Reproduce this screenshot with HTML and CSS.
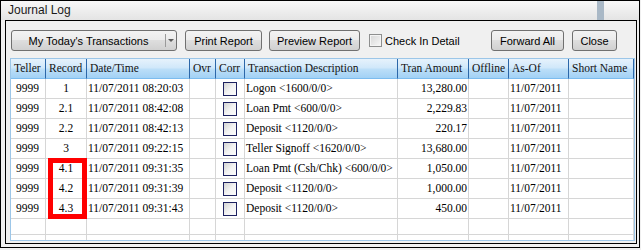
FILE: index.html
```html
<!DOCTYPE html>
<html lang="en">

<head>
    <meta charset="UTF-8">
    <title>Journal Log</title>
    <link rel="stylesheet" href="styles.css">
</head>

<body>
    <div class="window">
        <div class="titlebar">
            <span class="title">Journal Log</span>
            <span class="title-mark"></span>
        </div>

        <div class="panel">
            <div class="toolbar">
                <button class="btn combo">
                    <span class="combo-text">My Today's Transactions</span>
                    <span class="combo-sep"></span>
                    <span class="combo-arrow"><span class="arrow"></span></span>
                </button>
                <button class="btn btn-print">Print Report</button>
                <button class="btn btn-preview">Preview Report</button>
                <label class="check"><span class="check-box"></span>Check In Detail</label>
                <button class="btn btn-forward">Forward All</button>
                <button class="btn btn-close">Close</button>
            </div>

            <div class="grid">
                <table class="log">
                    <colgroup>
                        <col class="w-teller">
                        <col class="w-record">
                        <col class="w-date">
                        <col class="w-ovr">
                        <col class="w-corr">
                        <col class="w-desc">
                        <col class="w-amount">
                        <col class="w-offline">
                        <col class="w-asof">
                        <col class="w-short">
                    </colgroup>
                    <thead>
                        <tr>
                            <th>Teller</th>
                            <th>Record</th>
                            <th>Date/Time</th>
                            <th>Ovr</th>
                            <th>Corr</th>
                            <th>Transaction Description</th>
                            <th>Tran Amount</th>
                            <th>Offline</th>
                            <th>As-Of</th>
                            <th>Short Name</th>
                        </tr>
                    </thead>
                    <tbody>
                        <tr>
                            <td class="teller">9999</td><td class="c">1</td><td>11/07/2011 08:20:03</td><td></td>
                            <td class="c"><span class="cb"></span></td><td>Logon &lt;1600/0/0&gt;</td>
                            <td class="r">13,280.00</td><td></td><td>11/07/2011</td><td></td>
                        </tr>
                        <tr>
                            <td class="teller">9999</td><td class="c">2.1</td><td>11/07/2011 08:42:08</td><td></td>
                            <td class="c"><span class="cb"></span></td><td>Loan Pmt &lt;600/0/0&gt;</td>
                            <td class="r">2,229.83</td><td></td><td>11/07/2011</td><td></td>
                        </tr>
                        <tr>
                            <td class="teller">9999</td><td class="c">2.2</td><td>11/07/2011 08:42:13</td><td></td>
                            <td class="c"><span class="cb"></span></td><td>Deposit &lt;1120/0/0&gt;</td>
                            <td class="r">220.17</td><td></td><td>11/07/2011</td><td></td>
                        </tr>
                        <tr>
                            <td class="teller">9999</td><td class="c">3</td><td>11/07/2011 09:22:15</td><td></td>
                            <td class="c"><span class="cb"></span></td><td>Teller Signoff &lt;1620/0/0&gt;</td>
                            <td class="r">13,680.00</td><td></td><td>11/07/2011</td><td></td>
                        </tr>
                        <tr>
                            <td class="teller">9999</td><td class="c">4.1</td><td>11/07/2011 09:31:35</td><td></td>
                            <td class="c"><span class="cb"></span></td><td>Loan Pmt (Csh/Chk) &lt;600/0/0&gt;</td>
                            <td class="r">1,050.00</td><td></td><td>11/07/2011</td><td></td>
                        </tr>
                        <tr>
                            <td class="teller">9999</td><td class="c">4.2</td><td>11/07/2011 09:31:39</td><td></td>
                            <td class="c"><span class="cb"></span></td><td>Deposit &lt;1120/0/0&gt;</td>
                            <td class="r">1,000.00</td><td></td><td>11/07/2011</td><td></td>
                        </tr>
                        <tr>
                            <td class="teller">9999</td><td class="c">4.3</td><td>11/07/2011 09:31:43</td><td></td>
                            <td class="c"><span class="cb"></span></td><td>Deposit &lt;1120/0/0&gt;</td>
                            <td class="r">450.00</td><td></td><td>11/07/2011</td><td></td>
                        </tr>
                        <tr class="blank">
                            <td></td><td></td><td></td><td></td><td></td><td></td><td></td><td></td><td></td><td></td>
                        </tr>
                        <tr>
                            <td></td><td></td><td></td><td></td><td></td><td></td><td></td><td></td><td></td><td></td>
                        </tr>
                    </tbody>
                </table>

                <!-- annotation drawn over the Record column -->
                <div class="highlight"></div>
            </div>
        </div>
    </div>
</body>

</html>
```

FILE: styles.css
```css
body {
    margin: 0;
    background-color: #f0f0f0;
    font-family: 'Liberation Sans', Arial, sans-serif;
}

.window {
    width: 640px;
    height: 248px;
    box-sizing: border-box;
    border: 1px solid #000;
    background-color: #f0f0f0;
    display: flex;
    flex-direction: column;
}

.titlebar {
    height: 19px;
    display: flex;
    align-items: center;
    background: linear-gradient(#f8f8f8, #e4e4e4);
}

.title {
    font-size: 12px;
    line-height: 17px;
    padding-left: 7px;
    color: #1a1a1a;
}

.title-mark {
    margin-left: auto;
    margin-right: 35px;
    width: 7px;
    align-self: stretch;
    background-color: #a9b8c6;
}

.panel {
    margin: 0 2px 0 4px;
    height: 224px;
    box-sizing: border-box;
    border: 1px solid #000;
    display: flex;
    flex-direction: column;
}

/* toolbar */

.toolbar {
    display: flex;
    align-items: center;
    height: 21px;
    margin: 9px 19px 0 5px;
}

.btn {
    height: 21px;
    box-sizing: border-box;
    padding: 0;
    margin: 0 8px 0 0;
    border: 1px solid #707070;
    border-radius: 3px;
    background: linear-gradient(#f3f3f3 0%, #ebebeb 50%, #dedede 50%, #d0d0d0 100%);
    font-family: 'Liberation Sans', Arial, sans-serif;
    font-size: 11px;
    color: #000;
}

.combo {
    width: 166px;
    display: flex;
    align-items: center;
}

.combo-text {
    flex: 1;
    text-align: center;
}

.combo-sep {
    width: 1px;
    height: 13px;
    background-color: #9a9a9a;
}

.combo-arrow {
    width: 10px;
    display: flex;
    justify-content: center;
}

.arrow {
    width: 0;
    height: 0;
    border-left: 3px solid transparent;
    border-right: 3px solid transparent;
    border-top: 3px solid #5c5c5c;
}

.btn-print {
    width: 77px;
    margin-right: 7px;
}

.btn-preview {
    width: 91px;
    margin-right: 9px;
}

.check {
    display: flex;
    align-items: center;
    font-size: 11px;
    color: #000;
}

.check-box {
    width: 13px;
    height: 13px;
    box-sizing: border-box;
    margin-right: 3px;
    border: 1px solid #8e8f8f;
    background: linear-gradient(135deg, #d6d6d6, #f8f8f8);
    box-shadow: inset 0 0 0 1px #f4f4f4;
}

.btn-forward {
    width: 73px;
    margin-left: auto;
}

.btn-close {
    width: 45px;
    margin-right: 0;
}

/* grid */

.grid {
    position: relative;
    margin: 7px 1px 0 4px;
    height: 183px;
    box-sizing: border-box;
    border: 1px solid #9cc6e8;
    background-color: #fff;
    overflow: hidden;
}

.log {
    width: 623px;
    table-layout: fixed;
    border-collapse: separate;
    border-spacing: 0;
    font-family: 'Liberation Serif', 'Times New Roman', serif;
    font-size: 11.5px;
    color: #000;
}

.w-teller { width: 35px; }
.w-record { width: 41px; }
.w-date { width: 103px; }
.w-ovr { width: 26px; }
.w-corr { width: 29px; }
.w-desc { width: 153px; }
.w-amount { width: 71px; }
.w-offline { width: 40px; }
.w-asof { width: 60px; }
.w-short { width: 65px; }

.log th {
    height: 19px;
    padding: 0 0 0 3px;
    line-height: 19px;
    text-align: left;
    font-weight: normal;
    color: #111;
    white-space: nowrap;
    overflow: hidden;
    background: linear-gradient(#e6f2fc 0%, #d1e8fa 45%, #bbdef8 55%, #a2d1f5 100%);
    border-right: 1px solid #2c67a9;
    border-bottom: 1px solid #7cbcef;
}

.log td {
    height: 19px;
    padding: 0 1px;
    line-height: 19px;
    white-space: nowrap;
    overflow: hidden;
    border-right: 1px solid #d6d6d6;
    border-bottom: 1px solid #d6d6d6;
}

.log td.teller {
    padding-left: 5px;
}

.log td.c {
    text-align: center;
}

.log td.r {
    text-align: right;
}

.log tr.blank td {
    height: 15px;
}

.cb {
    display: inline-block;
    width: 14px;
    height: 14px;
    box-sizing: border-box;
    vertical-align: middle;
    border: 1px solid #1d2160;
    background: linear-gradient(135deg, #d4d4d4, #f4f4f4 55%, #fafafa);
}

.highlight {
    position: absolute;
    left: 37px;
    top: 99px;
    width: 39px;
    height: 61px;
    box-sizing: border-box;
    border: 5px solid #f00;
}
```
